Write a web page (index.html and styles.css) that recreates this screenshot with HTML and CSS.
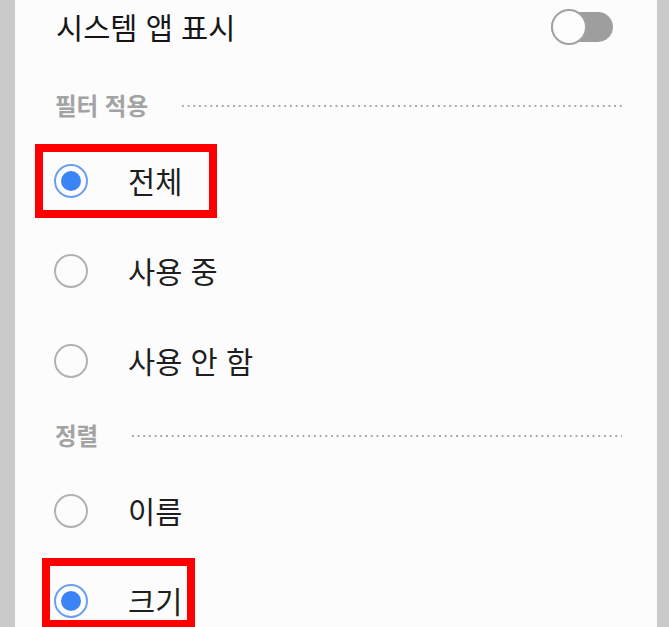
FILE: index.html
```html
<!DOCTYPE html>
<html lang="ko">
<head>
<meta charset="utf-8">
<link rel="stylesheet" href="styles.css">
</head>
<body>
<div class="panel">
  <div class="title-row">
    <span class="title">시스템 앱 표시</span>
    <span class="toggle"><span class="knob"></span></span>
  </div>

  <div class="section-head"><span class="section-label">필터 적용</span><span class="dots"></span></div>
  <div class="option">
    <span class="radio checked"></span><span class="label">전체</span>
    <span class="mark mark-a"></span>
  </div>
  <div class="option"><span class="radio"></span><span class="label">사용 중</span></div>
  <div class="option"><span class="radio"></span><span class="label">사용 안 함</span></div>

  <div class="section-head"><span class="section-label">정렬</span><span class="dots"></span></div>
  <div class="option"><span class="radio"></span><span class="label">이름</span></div>
  <div class="option">
    <span class="radio checked"></span><span class="label">크기</span>
    <span class="mark mark-b"></span>
  </div>
</div>
</body>
</html>
```

FILE: styles.css
```css
html, body {
  margin: 0;
  padding: 0;
}
body {
  background: #cacaca;
  height: 627px;
  overflow: hidden;
  font-family: "Noto Sans CJK KR", sans-serif;
}
.panel {
  margin: 0 12px 0 15px;
  background: #fcfcfc;
  padding-left: 40px;
  height: 700px;
  display: flex;
  flex-direction: column;
}
.title-row {
  height: 54px;
  margin-bottom: 22px;
  display: flex;
  align-items: center;
  justify-content: space-between;
  padding-right: 44px;
}
.title {
  font-size: 29.5px;
  color: #161616;
  padding-left: 1px;
  line-height: 1;
}
.toggle {
  position: relative;
  width: 62px;
  height: 30px;
  border-radius: 15px;
  background: #9e9e9e;
}
.knob {
  position: absolute;
  left: 0;
  top: -3px;
  width: 36px;
  height: 36px;
  box-sizing: border-box;
  border-radius: 50%;
  background: #fdfdfd;
  border: 2px solid #a2a2a2;
}
.section-head {
  height: 44px;
  margin: 8px 35px 8px 0;
  display: flex;
  align-items: center;
  gap: 32px;
}
.section-label {
  font-size: 23.5px;
  font-weight: 700;
  color: #a3a3a3;
  line-height: 1;
}
.dots {
  flex: 1;
  height: 2px;
  background-image: radial-gradient(circle, #a8a8a8 1px, transparent 1.3px);
  background-size: 5.7px 2px;
  background-repeat: repeat-x;
}
.option {
  position: relative;
  height: 90px;
  display: flex;
  align-items: center;
}
.radio {
  width: 34px;
  height: 34px;
  box-sizing: border-box;
  border-radius: 50%;
  border: 2px solid #b2b2b2;
  margin-left: -1px;
  margin-right: 40px;
  flex: none;
  display: flex;
  align-items: center;
  justify-content: center;
}
.radio.checked {
  border-color: #6c9ff0;
}
.radio.checked::after {
  content: "";
  width: 20px;
  height: 20px;
  border-radius: 50%;
  background: #3b84f5;
}
.label {
  font-size: 29.5px;
  color: #1e1e1e;
  line-height: 1;
}
.mark {
  position: absolute;
  border: 8px solid #ff0000;
  box-sizing: border-box;
}
.mark-a {
  left: -20px;
  top: 8px;
  width: 182px;
  height: 74px;
}
.mark-b {
  left: -13px;
  top: 2px;
  width: 153px;
  height: 70px;
}
```
